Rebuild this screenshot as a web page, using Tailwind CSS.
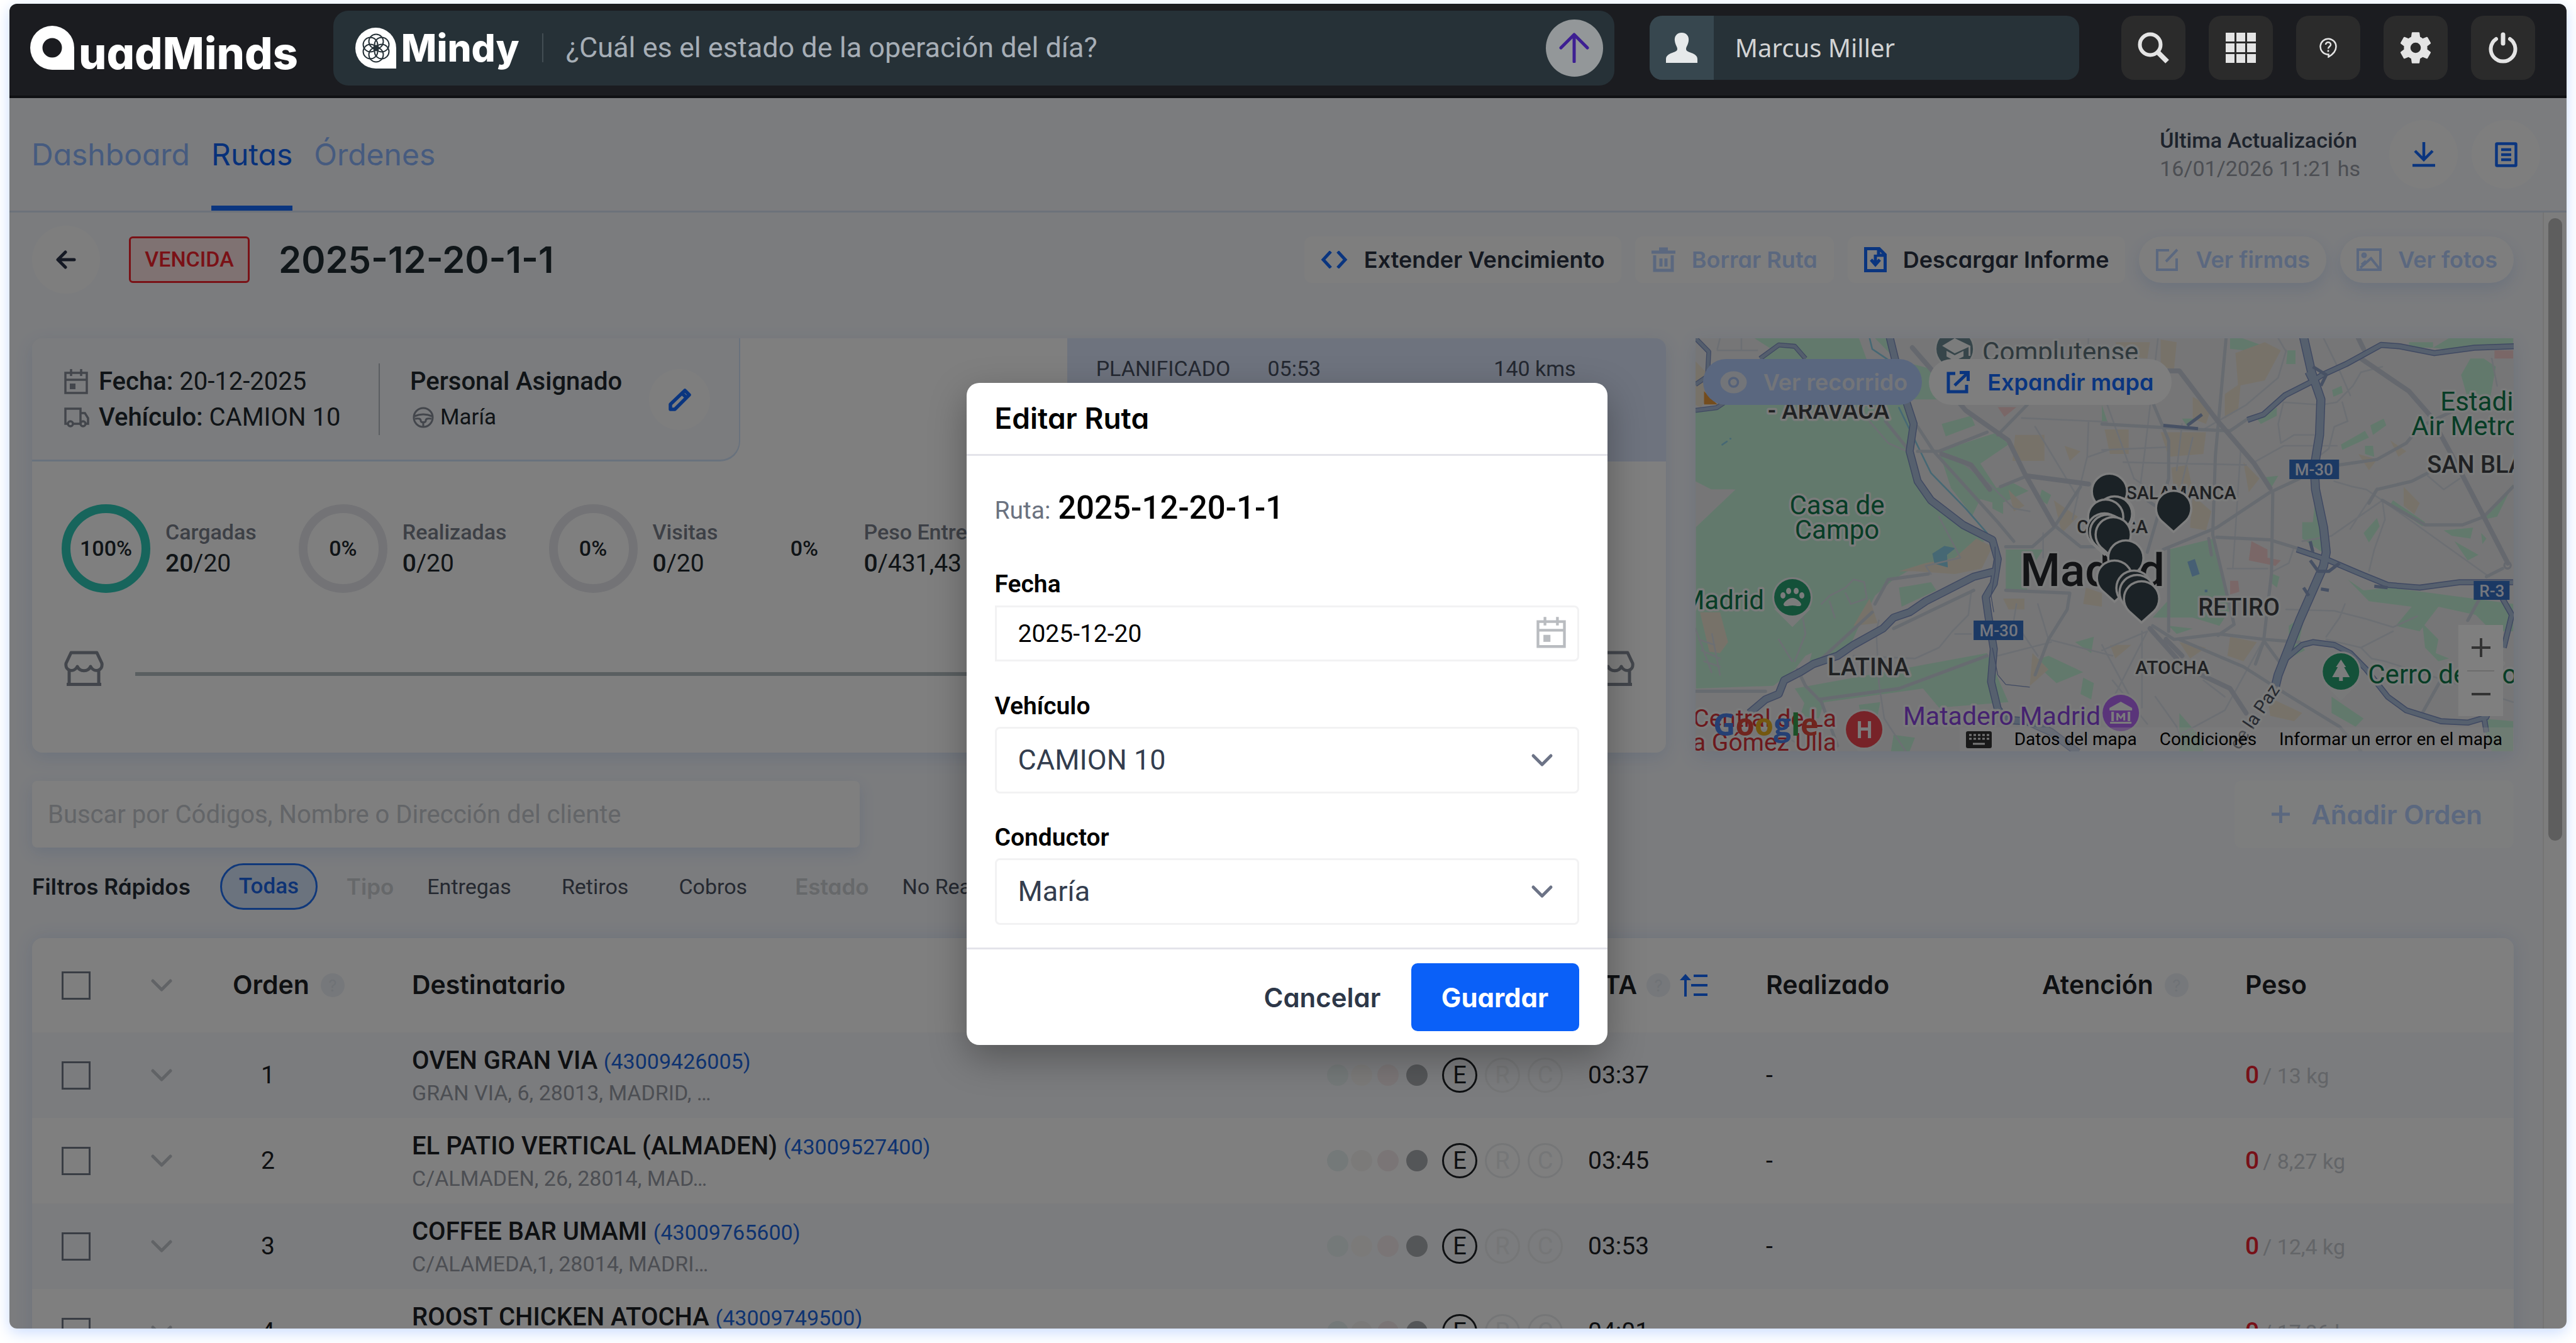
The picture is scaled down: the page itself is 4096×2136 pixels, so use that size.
<!DOCTYPE html>
<html lang="es" class="h-full">
<head>
    <meta charset="UTF-8">
    <meta name="viewport" content="width=device-width, initial-scale=1.0">
    <title>QuadMinds - Editar Ruta</title>
    <script src="https://cdn.jsdelivr.net/npm/@tailwindcss/browser@4"></script>
    <style>
        body {
            font-family: Roboto, sans-serif;
        }
        .display {
            font-family: Inter, sans-serif;
            font-feature-settings: 'cv11';
        }
    </style>
</head>
<body class="h-screen overflow-hidden bg-white px-[15px] pt-[6px] pb-[23px]">

    <!-- Shared icons -->
    <svg class="hidden">
        <symbol id="i-calendar" viewBox="0 0 38 40">
            <path fill="none" stroke="currentColor" stroke-width="3.5" d="M2 6h34v32H2zM2 17h34M11 0v11M27 0v11"/>
            <path fill="currentColor" d="M9 23h9v9H9z"/>
        </symbol>
        <symbol id="i-chevron" viewBox="0 0 36 22">
            <path fill="none" stroke="currentColor" stroke-width="5" stroke-linecap="round" stroke-linejoin="round" d="M4 4l14 14L32 4"/>
        </symbol>
        <symbol id="i-shop" viewBox="0 0 63 57">
            <path fill="none" stroke="currentColor" stroke-width="5" stroke-linejoin="round" d="M11 3h41l8 17c2 13-13 15-18 5-4 9-17 9-21 0-5 10-20 8-18-5zM8 30v23M55 30v23M4 53.500h55"/>
        </symbol>
    </svg>

    <div class="flex h-full flex-col overflow-hidden rounded-xl shadow-[0_6px_24px_#c9dbff]">

        <!-- Top bar -->
        <header class="flex h-[150px] shrink-0 items-center border-b-4 border-[#0f1013] bg-[#1b1c20] pr-[50px] pb-[6px] pl-[33px]">
            <a href="#" class="flex items-end" aria-label="QuadMinds">
                <svg class="h-[70px] w-[70px]" viewBox="0 0 70 70"><path fill="#fff" fill-rule="evenodd" d="M35 0a35 35 0 0 1 35 35v35H35A35 35 0 0 1 35 0zm0 19.500a15.500 15.500 0 1 0 0 31 15.500 15.500 0 0 0 0-31z"/></svg>
                <span class="display ml-[7px] h-[70px] text-[70px] leading-[88px] font-extrabold text-white">uadMinds</span>
            </a>
            <div class="ml-[56px] flex h-[119px] w-[2037px] items-center rounded-[24px] bg-[#263137] pr-[18px] pl-[35px]">
                <svg class="h-[65px] w-[65px]" viewBox="0 0 65 65">
                    <path fill="#fff" d="M32.500 0A32.500 32.500 0 0 1 65 32.500V65H32.500a32.500 32.500 0 0 1 0-65z"/>
                    <g fill="none" stroke="#263137" stroke-width="2">
                        <circle cx="33" cy="22" r="11.500"/><circle cx="33" cy="43" r="11.500"/>
                        <circle cx="24" cy="27" r="11.500"/><circle cx="42" cy="27" r="11.500"/>
                        <circle cx="24" cy="38" r="11.500"/><circle cx="42" cy="38" r="11.500"/>
                        <circle cx="33" cy="32.500" r="4"/>
                    </g>
                </svg>
                <span class="display ml-[8px] text-[60px] leading-[68px] font-extrabold text-white">Mindy</span>
                <span class="ml-[36px] h-[46px] w-[2px] bg-[#434d53]"></span>
                <input type="text" aria-label="Pregunta a Mindy" placeholder="¿Cuál es el estado de la operación del día?" class="ml-[36px] min-w-0 flex-1 bg-transparent text-[45px] leading-[56px] placeholder:text-[#a6aeb6] outline-none">
                <button type="button" aria-label="Enviar" class="flex h-[91px] w-[91px] items-center justify-center rounded-full bg-[#939799]">
                    <svg class="h-[48px] w-[48px]" viewBox="0 0 48 48" fill="none" stroke="#3d1f92" stroke-width="5" stroke-linecap="round" stroke-linejoin="round"><path d="M24 46V3M3 24L24 3l21 21"/></svg>
                </button>
            </div>
            <div class="ml-[56px] flex h-[102px] w-[683px] items-center overflow-hidden rounded-[20px] bg-[#273238]">
                <span class="flex h-full w-[102px] items-center justify-center bg-[#37474f]">
                    <svg class="h-[48px] w-[50px]" viewBox="0 0 50 48" fill="#e6e9ea"><path d="M25 0c8 0 12 6 11 13-1 7-4 9-4 13 0 3 3 4 8 6 6 2 10 5 10 10v6H0v-6c0-5 4-8 10-10 5-2 8-3 8-6 0-4-3-6-4-13C13 6 17 0 25 0z"/></svg>
                </span>
                <span class="pl-[34px] font-['Noto_Sans',sans-serif] text-[40px] text-[#d2d3d4]">Marcus Miller</span>
            </div>
            <nav class="ml-auto flex gap-[37px] text-[#e4e4e4]">
                <button type="button" aria-label="Buscar" class="flex h-[102px] w-[102px] items-center justify-center rounded-[20px] bg-[#2b2b2b]">
                    <svg class="h-[50px] w-[50px]" viewBox="0 0 50 50" fill="none" stroke="currentColor"><circle cx="20" cy="20" r="16.500" stroke-width="6"/><path stroke-width="8" d="M31 31l16 16"/></svg>
                </button>
                <button type="button" aria-label="Aplicaciones" class="flex h-[102px] w-[102px] items-center justify-center rounded-[20px] bg-[#2b2b2b]">
                    <svg class="h-[48px] w-[48px]" viewBox="0 0 48 48" fill="currentColor"><path d="M0 0h14v14H0zM17 0h14v14H17zM34 0h14v14H34zM0 17h14v14H0zM17 17h14v14H17zM34 17h14v14H34zM0 34h14v14H0zM17 34h14v14H17zM34 34h14v14H34z"/></svg>
                </button>
                <button type="button" aria-label="Ayuda" class="flex h-[102px] w-[102px] items-center justify-center rounded-[20px] bg-[#2b2b2b]">
                    <svg class="h-[32px] w-[28px]" viewBox="0 0 28 32" fill="none" stroke="currentColor" stroke-width="2.500"><path d="M12 26.500A12.500 12.500 0 1 1 26.500 14c0 7-6 13-12 16.500v-4z"/><path d="M10 11c0-5 8-5 8 0 0 3-4 3-4 6.500M14 19.500v3"/></svg>
                </button>
                <button type="button" aria-label="Configuración" class="flex h-[102px] w-[102px] items-center justify-center rounded-[20px] bg-[#2b2b2b]">
                    <svg class="h-[62px] w-[62px]" viewBox="0 0 24 24" fill="currentColor"><path d="M19.140 12.940c.04-.3.060-.61.060-.94s-.02-.64-.07-.94l2.030-1.580a.5.5 0 0 0 .12-.61l-1.920-3.320a.5.5 0 0 0-.59-.22l-2.390.96a7 7 0 0 0-1.620-.94l-.36-2.540A.48.48 0 0 0 13.920 2.400h-3.840a.48.48 0 0 0-.47.41l-.36 2.540c-.59.24-1.130.57-1.620.94l-2.390-.96a.48.48 0 0 0-.59.220L2.740 8.870a.48.48 0 0 0 .12.61l2.030 1.580c-.05.3-.09.630-.09.940s.02.640.070.940l-2.030 1.580a.5.5 0 0 0-.12.610l1.920 3.320c.12.220.37.290.59.220l2.390-.96c.5.380 1.030.7 1.620.940l.36 2.540c.05.240.24.410.48.410h3.840c.24 0 .44-.17.47-.41l.36-2.540a7 7 0 0 0 1.620-.94l2.390.960c.22.080.47 0 .59-.22l1.920-3.320a.48.48 0 0 0-.12-.61zM12 15.200a3.200 3.200 0 1 1 0-6.400 3.200 3.200 0 0 1 0 6.400z"/></svg>
                </button>
                <button type="button" aria-label="Salir" class="flex h-[102px] w-[102px] items-center justify-center rounded-[20px] bg-[#2b2b2b]">
                    <svg class="h-[50px] w-[46px]" viewBox="0 0 46 50" fill="none" stroke="currentColor" stroke-width="6" stroke-linecap="round"><path d="M12 11a19.500 19.500 0 1 0 22 0"/><path stroke-width="7" d="M23 4v14"/></svg>
                </button>
            </nav>
        </header>

        <div class="relative flex min-h-0 flex-1 flex-col overflow-hidden bg-[#f6f8fc]">

            <!-- Tabs -->
            <div class="flex h-[182px] shrink-0 items-stretch border-b-[3px] border-[#d8e5f5] pr-[42px] pl-[35px]">
                <nav class="display flex items-stretch gap-[34px] text-[48px] leading-[179px]">
                    <a href="#" class="text-[#8cb6ff]">Dashboard</a>
                    <a href="#" class="relative text-[#0f62f5] after:absolute after:inset-x-0 after:bottom-0 after:h-[8px] after:bg-[#146aff]">Rutas</a>
                    <a href="#" class="text-[#8cb6ff]">Órdenes</a>
                </nav>
                <div class="ml-auto flex items-center gap-[22px]">
                    <div class="mr-[24px] text-[34px] leading-[45px]">
                        <p class="font-medium text-[#3b4658]">Última Actualización</p>
                        <p class="text-[#989ca6]">16/01/2026 11:21 hs</p>
                    </div>
                    <button type="button" aria-label="Descargar" class="flex h-[109px] w-[109px] items-center justify-center rounded-full bg-[#fdfdfd] text-[#146aff]">
                        <svg class="h-[40px] w-[36px]" viewBox="0 0 36 40" fill="none" stroke="currentColor" stroke-width="4.500"><path d="M18 0v28M4 14l14 14 14-14M0 37h36"/></svg>
                    </button>
                    <button type="button" aria-label="Listado" class="flex h-[109px] w-[109px] items-center justify-center rounded-full bg-[#fdfdfd] text-[#146aff]">
                        <svg class="h-[40px] w-[36px]" viewBox="0 0 36 40" fill="none" stroke="currentColor" stroke-width="4.500"><rect x="2.500" y="2.500" width="31" height="35" rx="1"/><path d="M10 12h16M10 20h16M10 28h16"/></svg>
                    </button>
                </div>
            </div>

            <div class="flex min-h-0 flex-1">
                <main class="min-w-0 flex-1 overflow-hidden pt-[20px] pr-[46px] pl-[36px]">

                    <!-- Route title and actions -->
                    <div class="flex h-[109px] items-center">
                        <button type="button" aria-label="Volver" class="flex h-[108px] w-[108px] items-center justify-center rounded-full bg-[#fdfdfd] text-[#2b3348]">
                            <svg class="h-[30px] w-[32px]" viewBox="0 0 32 30" fill="none" stroke="currentColor" stroke-width="5" stroke-linecap="round" stroke-linejoin="round"><path d="M29 15H4M15 3L3 15l12 12"/></svg>
                        </button>
                        <span class="ml-[46px] flex h-[74px] w-[192px] items-center justify-center rounded-[6px] border-[3px] border-[#f5222d] bg-[#ffe4e4] text-[34px] font-medium text-[#f5222d]">VENCIDA</span>
                        <h1 class="display ml-[46px] text-[58px] leading-[70px] font-semibold text-[#202d33]">2025-12-20-1-1</h1>
                        <div class="display ml-auto flex items-center gap-[22px] text-[36px] leading-[42px] font-semibold">
                            <button type="button" class="flex h-[74px] items-center gap-[26px] rounded-xl bg-[#fdfdfd] px-[26px] text-[#2a3242]">
                                <svg class="h-[28px] w-[43px]" viewBox="0 0 43 28" fill="none" stroke="#146aff" stroke-width="5"><path d="M16 1L4 14l12 13M27 1l12 13-12 13"/></svg>
                                Extender Vencimiento
                            </button>
                            <button type="button" disabled class="flex h-[74px] items-center gap-[26px] rounded-xl bg-[#fdfdfd] px-[26px] text-[#b6d0ff]">
                                <svg class="h-[40px] w-[38px]" viewBox="0 0 38 40" fill="none" stroke="currentColor" stroke-width="5"><path d="M5 13v24h28V13M0 8h38M12 3h14M15 18v13M23 18v13"/></svg>
                                Borrar Ruta
                            </button>
                            <button type="button" class="flex h-[74px] items-center gap-[26px] rounded-xl bg-[#fdfdfd] px-[26px] text-[#2a3242]">
                                <svg class="h-[40px] w-[36px]" viewBox="0 0 36 40" fill="none" stroke="#146aff" stroke-width="5"><path d="M2.500 2.500H24L33.500 12v25.500h-31zM18 12v12M11 20l7 8 7-8M23 3v10h10"/></svg>
                                Descargar Informe
                            </button>
                            <button type="button" disabled class="flex h-[74px] items-center gap-[26px] rounded-full bg-[#fdfdfd] px-[26px] text-[#b6d0ff] shadow-[0_10px_24px_#d9e5fa]">
                                <svg class="h-[38px] w-[38px]" viewBox="0 0 38 38" fill="none" stroke="currentColor" stroke-width="4"><path d="M22 4H3v31h31V17M17 22L35 3"/></svg>
                                Ver firmas
                            </button>
                            <button type="button" disabled class="flex h-[74px] items-center gap-[26px] rounded-full bg-[#fdfdfd] px-[26px] text-[#b6d0ff] shadow-[0_10px_24px_#d9e5fa]">
                                <svg class="h-[38px] w-[40px]" viewBox="0 0 40 38" fill="none" stroke="currentColor" stroke-width="4"><path d="M2 3h36v32H2zM6 32l17-15 13 16M8 27l7-6"/><circle cx="12" cy="12" r="2.500"/></svg>
                                Ver fotos
                            </button>
                        </div>
                    </div>

                    <div class="mt-[71px] grid grid-cols-[2597fr_1301fr] items-start gap-[47px]">

                        <!-- Route summary -->
                        <section class="overflow-hidden rounded-2xl bg-white pb-[105px] shadow-[0_8px_28px_#d9e5fa]">
                            <div class="flex h-[196px] justify-between">
                                <div class="flex w-[1126px] items-start rounded-br-[32px] border-r-2 border-b-[3px] border-[#d3e4fa] bg-[#f6f8fc] pt-[40px] pr-[46px] pl-[51px] text-[40px] leading-[57px] text-[#20282e]">
                                    <div class="h-[114px] w-[502px] border-r-2 border-[#b6bcc4]">
                                        <p class="flex items-center gap-[17px]"><svg class="h-[40px] w-[38px] text-[#878d98]"><use href="#i-calendar"/></svg><span><b class="font-medium">Fecha:</b> 20-12-2025</span></p>
                                        <p class="flex items-center gap-[15px]">
                                            <svg class="h-[32px] w-[40px] text-[#878d98]" viewBox="0 0 40 32" fill="none" stroke="currentColor" stroke-width="3.500"><path d="M5 26H2V2h24v24H15M26 9h7l5 8v9h-3"/><circle cx="10" cy="26" r="4"/><circle cx="30" cy="26" r="4"/></svg>
                                            <span><b class="font-medium">Vehículo:</b> CAMION 10</span>
                                        </p>
                                    </div>
                                    <div class="ml-[48px]">
                                        <p class="font-medium">Personal Asignado</p>
                                        <p class="flex items-center gap-[10px] pl-[4px] text-[35px]">
                                            <svg class="h-[34px] w-[34px] text-[#878d98]" viewBox="0 0 34 34" fill="none" stroke="currentColor" stroke-width="3"><circle cx="17" cy="17" r="15"/><path d="M3 15q14-6 28 0M17 31v-8M4 19c6-1 9 0 9 3s4 3 4 3 4 0 4-3 3-4 9-3"/></svg>
                                            María
                                        </p>
                                    </div>
                                    <button type="button" aria-label="Editar personal" class="mt-[9px] ml-auto flex h-[97px] w-[97px] items-center justify-center rounded-full bg-[#fdfdfd]">
                                        <svg class="h-[36px] w-[36px]" viewBox="0 0 36 36" fill="none" stroke="#146aff" stroke-width="5.500" stroke-linejoin="round"><path d="M3 33v-8L26 3l7 7-23 23zM22 8l6 6"/></svg>
                                    </button>
                                </div>
                                <div class="flex w-[952px] bg-[#dce7fd] pt-[28px] pr-[143px] pl-[46px] text-[34px] leading-[40px] text-[#485062]">
                                    <span>PLANIFICADO</span><span class="ml-[59px]">05:53</span><span class="ml-auto">140 kms</span>
                                </div>
                            </div>
                            <div id="stats" class="mt-[68px] flex gap-[67px] pl-[47px]"></div>
                            <div class="mt-[92px] flex items-center pr-[50px] pl-[51px] text-[#868d98]">
                                <svg class="h-[57px] w-[63px]"><use href="#i-shop"/></svg>
                                <span class="mx-[50px] mt-[16px] h-[6px] flex-1 bg-[#b4bec2]"></span>
                                <svg class="h-[57px] w-[63px]"><use href="#i-shop"/></svg>
                            </div>
                        </section>

                        <!-- Map -->
                        <section class="relative h-[657px] overflow-hidden shadow-[0_8px_28px_#d9e5fa]">
                            <svg class="h-full w-full bg-[#ececee]" viewBox="0 0 1301 657" preserveAspectRatio="xMidYMid slice">
                                <g transform="translate(-12 -11) scale(.4245 .4336)" fill="none" stroke-linejoin="round" stroke-linecap="round">
                                    <g fill="#c5f3d8">
                                        <path d="M240 20H740l90 250 20 110-20 60 40 120 60 80 110 80 70 50-30 10-110 70-130 20-70 40-70 60-50 100-80 60-130 60-40 50-80 60-290 10V700l140-120-90 0-60-30V290l100-20 80-80 60-80 60-40z"/>
                                        <path d="M840 120l80 20 60 110-140 0zM950 340l110-30 15 35-110 40zM940 440l220-70 40 45-105 70 60 90 60-20 60 30-110 50-70-20-30 60-80-100z"/>
                                        <path d="M1325 580l35 20-15 35-30-20zM1140 610l40 20v40l-40-20zM1190 800h140l-60 90v60h-80zM790 940l120-20 20 30-130 60zM480 1120l170-60-60 130-140 40zM400 1310l720-130 80 180-260 20-60-70-440 60zM440 1350l80-20-30 90-70-10zM1290 1210l60-20 130 60-100 40zM1450 1140l70-20-10 60zM1480 1270l40 20-10 60-40-20zM640 1370l80-10-10 50-60 20zM770 1480l80 10-20 50h-70z"/>
                                    </g>
                                    <path fill="#ececee" d="M28 550l60 30h90L60 690 28 720zM640 25h60l80 80h-110z"/>
                                    <g fill="#efe5d3">
                                        <path d="M790 880l100-30 110-20 80-70 60 30-40 80-100 20-150-10zM620 1080l60-100 20 60 10 30zM45 1030h75l30 110-30 40-40-5zM28 110l80 80-60 90-20-10zM1225 380h110v95h-120zM1410 420l60 20-40 35zM1200 580l60 60-40 20zM1370 620l90 60-60 60zM1180 980h80v40h-60zM1290 1180l60 60-70 60zM1490 940l60 20v50l-70-10z"/>
                                    </g>
                                    <path fill="#e99a3c" d="M60 220l50 48H60z"/>
                                    <path fill="#8dd0e8" d="M915 815l45-28 42 8-32 25 3 46-50-14z"/>
                                    <path stroke="#8dd0e8" stroke-width="6" d="M680 25l10 40 60 40M790 280l90 180 30 60 130 130 80 90M128 416l18-12M158 394h2"/>
                                    <path fill="#f5cfcf" d="M1160 278h70l-45 36z"/>
                                    <path stroke="#d9dee7" stroke-width="6" d="M110 70h150M120 25l-10 40M200 25v45M680 330l70 80 70 30M400 1210l40-100-10-60M340 1130l50 80M530 970l-30 30M530 970l60-30 30-30 40 10 10 60-60 20-20-40M530 990l20 60M940 680l80 150-130 30 20 30M1060 960l-10 80-60 60-50 60-90 40-230-10M715 1290l-10-190 10-40M1000 1110h60M715 1290l20 130 80 120M390 1500l60 40M1000 460l140 110 80 80 60 10M1230 1000l-10 60 90 130M1310 1000l40 130M1490 250l10-230M1250 318l320 14M1500 330l-5 130-30 120M1500 460l120-40M1440 690l30-130M1160 1190l200-50M1350 1130l120 30 120 30M1330 740v90M1300 350l160 260M28 1090l60 160M40 1130l60 20M50 1170l70 30M60 1210l60 20M90 1110l30 150"/>
                                    <path stroke="#cfd6e1" stroke-width="12" d="M740 330l90 110M860 440h80l180-70M1160 380l110-110M860 350l60 90 240 260 60 70M1200 640M1190 790h100l80-70 100-150M1170 570l100-40M1370 710l100 80h120M1190 950l240 10-10 60-70 110-50 130M490 1350l300-40 330-120M30 1320l260 0M410 1240l30 60 60 60 60 160M700 1000l50-90 150-20M690 1030l-200 180M770 1090l300-140M620 1520M1000 1130"/>
                                    <path stroke="#cad1dc" stroke-width="18" d="M840 60l80 90 120 140 160 110 60 120 110 190M1270 530l230 30M950 450l110 40 70 90"/>
                                    <g stroke-linecap="butt">
                                        <path stroke="#7f92c4" stroke-width="18" d="M28 25l50 50-5 90-45 30M28 290l80-10 60-40M270 100l70-50 60 5 40 45"/>
                                        <path stroke="#a9bcda" stroke-width="12" d="M28 25l50 50-5 90-45 30M28 290l80-10 60-40M270 100l70-50 60 5 40 45"/>
                                        <path stroke="#7f92c4" stroke-width="30" d="M755 20l50 200 40 120-15 100 30 110 50 70 120 90 110 55 20 70-15 90-30 50 10 70 20 120-10 120 25 100 30 40 80 5 90 40 100 75M230 1400l60-50 50-20 20-50 60-30 50-30 90-30 60-40 110-60 40-40 60-20 60-40 180-90 80-20"/>
                                        <path stroke="#adc0dd" stroke-width="23" d="M755 20l50 200 40 120-15 100 30 110 50 70 120 90 110 55 20 70-15 90-30 50 10 70 20 120-10 120 25 100 30 40 80 5 90 40 100 75M230 1400l60-50 50-20 20-50 60-30 50-30 90-30 60-40 110-60 40-40 60-20 60-40 180-90 80-20"/>
                                        <path stroke="#7f92c4" stroke-width="3" d="M1150 790v90l-15 90 10 60M1140 1160l20 100 30 35 90 10"/>
                                    </g>
                                </g>
                                <g transform="translate(646 -11) scale(.4245 .4336)" fill="none" stroke-linejoin="round" stroke-linecap="round">
                                    <g fill="#c5f3d8">
                                        <path d="M250 800l170-40 60 260-40 60-100-30H190l55-60zM480 25h45l85 30-10 20-120-10zM695 70h30v50h-35zM862 215l35-15 5 25-35 15zM580 320l75-40v30l-60 30zM1380 100h50l45 30-20 110-90-10-20-70zM1005 345l50-25 10 25-50 35zM895 415l90-50 15 25-100 45zM985 420l30 0 5 40-35-10zM610 535l50-5-30 50zM750 700h40l15-150 20 260-75-50zM980 740l50-55 10 30-40 60zM1090 620l120 80-10 15-120-80zM1280 730l110-10-10 40-70-10zM1320 770l90 50-40 20zM1420 740l20 20-15 20zM640 890l25 10-10 40-25-20zM920 910l60 40 100-10 460 60v100h-80l-60-60-140-30-70 90-90-20 60-70-160-20zM1200 1070l60 60-10 50 50 20-40 10-50-50zM860 1340l60 40 60 40-30 30-90-50zM1420 1420l120 10v110h-80zM700 1080l60-40-20 90 20 40-60 30zM250 1080l90 10-60 20zM290 1400l80 90 10 50h-90zM0 270l20 60-20 0zM300 320l50 0-30 30zM1430 690l110-130-60 120zM1240 60l60-35h240v20l-260 20zM1150 40h90v20h-90z"/>
                                    </g>
                                    <g fill="#efe5d3">
                                        <path d="M50 40h130l-10 60-100-10zM220 30l60 10-10 100-50-10zM500 80l110-40 60 30-60 110-100 20zM460 230l60-40-10 100-50 30zM340 240l70 40-20 60-50-20zM10 360h90v90H30zM220 370h170l-10 80-130 10zM260 500l60-10 20 90-70 10zM530 480l60 60-40 50zM340 600l70 60-20 70-60-10zM1080 400l60 40-30 20zM1130 570l60 60-20 40-40-30zM480 1120l100 20-50 70-60-20zM290 1140l100 20-60 40zM620 1340l130 60-30 30-90-20zM30 1150l80 0-60 50zM960 450l70 20-30 40z"/>
                                    </g>
                                    <path fill="#f5cfcf" d="M560 770l60 30v30l50 10-20 20-100-20zM480 915l30 0 5 40-35 10zM1470 70h70v30h-70z"/>
                                    <path fill="#8dbfe8" d="M320 845l28-10 18 55-28 10zM385 947h10v10h-10z"/>
                                    <path stroke="#d9dee7" stroke-width="6" d="M210 25l-50 420-20 150M280 640l60-250M300 340l-20 170M20 270l100 270 60 40M0 435l240-10M80 480l460 10M520 430l-20 300-10 140M690 70l-30 100-120 100-160 90M660 25l30 50M570 480l110-60h200M680 260l-20 80 10 70 50-30h80M680 260l140 10 60-10 60-60 30-50 80-20M900 260l20 70-50 20-20 80-40 30M1050 620l10 70-40 110-20 80M870 550l70 20 50 10 60 40 400 280M1050 620l-190 130-110 20M1030 575l-100 150M1220 530l60 50 60-40M830 25l60 120 40 90M690 1020l180 5 120 30 100 30 90-40M840 1130l130 30 40 40 50 10 480 150M840 1120l50-70 20-50M970 1160l120-60M1460 100l20 100M470 870h150M640 880l60-30 20-60M0 1170l170-70M170 1100L40 1350M150 1100v280M0 1280M40 1280l130 160M200 1340l80 110 20 60M600 1140l-140 250-170 90M0 1150l100 180M380 1280l80 60"/>
                                    <path stroke="#cfd6e1" stroke-width="12" d="M465 25l-40 430-10 290 80 330-60 40M190 260l60 140v140l-80 270M0 340l360 20 120 5 60-40M230 800l200-80 200-130 110-50M890 490l140-20 110-60 50-60 130-60M720 620M430 755l200 10 100 30M640 590l-5 300-30 250-30 80M250 800v300M190 1080l80 50 170-20 170 20 130 10M290 1130l240 100 160 100 200 120 80 90M610 1140l60 80M410 820l-10-60M1000 630l30-50 130-30 60-30M1050 620l160 90 140 0 80-30 110-110M1420 970l-50 90M1280 1260l-80 140M170 620l60 40M1440 900l60-30M160 590"/>
                                    <path stroke="#cad1dc" stroke-width="18" d="M240 145h50l140 180 140 160 60 90M180 1090l100 110M350 1250l130 60 60 90M970 100l180 120 80 90 100 180 190 360M960 25l20 40M240 1130l60 60"/>
                                    <circle cx="1519" cy="858" r="12" stroke="#cad1dc" stroke-width="8"/>
                                    <g stroke-linecap="butt">
                                        <path stroke="#7f92c4" stroke-width="34" d="M755 20l30 130 35 100-5 130-20 120 5 80 30 140 10 90-10 50-90 200-80 200-10 40"/>
                                        <path stroke="#7f92c4" stroke-width="22" d="M545 325l60-20 80-70 100-50 40-25 90-40 130-70 70 5 130 25 150-20 150-5M730 800l120 40 120 50 100 40 120 10 150-20 200 0M690 1200l60-50 40-10 80 10 60 30 60 60 80 100 70 50 130 40 100 5 70-20 20-50M1500 980l35 60-30 120M790 190l-20-40M1430 1410l10 60"/>
                                        <path stroke="#adc0dd" stroke-width="27" d="M755 20l30 130 35 100-5 130-20 120 5 80 30 140 10 90-10 50-90 200-80 200-10 40"/>
                                        <path stroke="#adc0dd" stroke-width="15" d="M545 325l60-20 80-70 100-50 40-25 90-40 130-70 70 5 130 25 150-20 150-5M730 800l120 40 120 50 100 40 120 10 150-20 200 0M690 1200l60-50 40-10 80 10 60 30 60 60 80 100 70 50 130 40 100 5 70-20 20-50M1500 980l35 60-30 120M790 190l-20-40M1430 1410l10 60"/>
                                        <path stroke="#8fa2c9" stroke-width="12" d="M790 130l50 30-20 40M780 840l30 40h40l40-30M780 770l10 40M230 345l130 12M320 345l55-40M755 940l20 30M820 945l30 5M1020 935l50 5"/>
                                    </g>
                                </g>

                                <!-- Place names -->
                                <g font-family="Roboto" stroke="#f4f6f6" stroke-width="7" stroke-linejoin="round" paint-order="stroke">
                                    <g font-size="42" fill="#0f7a4c">
                                        <text x="225" y="280" text-anchor="middle">Casa de</text>
                                        <text x="225" y="319" text-anchor="middle">Campo</text>
                                        <text x="109" y="431" text-anchor="end">Madrid</text>
                                        <text x="1184" y="115">Estadio</text>
                                        <text x="1138" y="154">Air Metro</text>
                                        <text x="1069" y="549">Cerro del Tío</text>
                                    </g>
                                    <text x="456" y="36" font-size="42" fill="#5e727a">Complutense</text>
                                    <g font-size="34" font-weight="500" fill="#404347">
                                        <text x="115" y="128" font-size="38">- ARAVACA</text>
                                        <text x="210" y="536" font-size="38">LATINA</text>
                                        <text x="799" y="441" font-size="38">RETIRO</text>
                                        <text x="1163" y="214" font-size="38">SAN BLAS</text>
                                        <text x="684" y="256" font-size="29">SALAMANCA</text>
                                        <text x="606" y="310" font-size="29">CHUECA</text>
                                        <text x="699" y="534" font-size="30">ATOCHA</text>
                                    </g>
                                    <text x="516" y="394" font-size="73" font-weight="500" fill="#26282c">Madrid</text>
                                    <text x="330" y="615" font-size="41" fill="#8a45e0">Matadero Madrid</text>
                                    <g font-size="39" fill="#d8323a">
                                        <text x="224" y="618" text-anchor="end">Central de La</text>
                                        <text x="224" y="656" text-anchor="end">a Gómez Ulla</text>
                                    </g>
                                    <text font-size="29" fill="#4c5260" transform="translate(864 656) rotate(-56)">de la Paz</text>
                                </g>

                                <!-- Road shields -->
                                <g font-family="Roboto" font-size="26" font-weight="500" fill="#e8eefc" text-anchor="middle">
                                    <path fill="#3672c9" d="M442 449h79v31h-79zM944 193h79v31h-79zM1237 386h57v30h-57z"/>
                                    <text x="482" y="474">M-30</text><text x="983" y="218">M-30</text><text x="1266" y="411">R-3</text>
                                </g>

                                <!-- Points of interest -->
                                <g stroke="#f1f3f3" stroke-width="6" paint-order="stroke">
                                    <path fill="#f1f3f3" d="M154 455l-22-22h44zM1026 572l-22-22h44zM268 662l-22-22h44zM676 636l-22-22h44z"/>
                                    <circle cx="154" cy="412" r="29" fill="#28a373"/>
                                    <circle cx="1026" cy="530" r="29" fill="#28a373"/>
                                    <circle cx="268" cy="622" r="29" fill="#ef4650"/>
                                    <circle cx="676" cy="596" r="29" fill="#b469f5"/>
                                    <circle cx="412" cy="17" r="29" fill="#6c8a94"/>
                                </g>
                                <g fill="#f6f8f8">
                                    <path d="M154 413c7 0 15 8 14 11-2 4-8 1-14 1s-12 3-14-1c-1-3 7-11 14-11z"/><ellipse cx="139" cy="409" rx="4" ry="5"/><ellipse cx="148" cy="402" rx="4" ry="5"/><ellipse cx="160" cy="402" rx="4" ry="5"/><ellipse cx="169" cy="409" rx="4" ry="5"/>
                                    <path d="M1026 511l8 12h-3l9 16h-11v6h-6v-6h-11l9-16h-3zM258 609h5v10h11v-10h5v27h-5v-12h-11v12h-5z"/>
                                    <path d="M676 578l18 10v4h-36v-4zM661 594h4v15h-4zM687 594h4v15h-4zM659 610h34v3h-34zM669 608v-12h3l4 6 4-6h3v12h-3v-7l-4 5-4-5v7z"/>
                                    <path d="M412 0l25 12v16h-3V14l-22 10-20-12zM399 20l13 7 14-7v9l-14 7-13-7z"/>
                                </g>

                                <!-- Stop pins -->
                                <defs><path id="pin" d="M0 37L-20 19A28 28 0 1 1 20 19Z"/></defs>
                                <g fill="#37454c" stroke="#fff" stroke-width="3.500">
                                    <use href="#pin" x="658" y="244"/><use href="#pin" x="760" y="271"/><use href="#pin" x="669" y="281"/>
                                    <use href="#pin" x="666" y="280"/><use href="#pin" x="652" y="285"/><use href="#pin" x="650" y="307"/><use href="#pin" x="655" y="309"/>
                                    <use href="#pin" x="664" y="313"/><use href="#pin" x="684" y="350"/><use href="#pin" x="666" y="382"/>
                                    <use href="#pin" x="697" y="398"/><use href="#pin" x="702" y="405"/><use href="#pin" x="709" y="415"/>
                                </g>

                                <text x="28" y="632" font-family="Open Sans" font-size="49" font-weight="700"><tspan fill="#4a80e8">G</tspan><tspan fill="#e04a3c">o</tspan><tspan fill="#e8b020">o</tspan><tspan fill="#4a80e8">g</tspan><tspan fill="#38a050">l</tspan><tspan fill="#e04a3c">e</tspan></text>
                            </svg>
                            <div class="display absolute top-[33px] left-[12px] flex gap-[11px] text-[36px] leading-[42px] font-semibold">
                                <button type="button" disabled class="flex h-[73px] items-center gap-[26px] rounded-full bg-[#b4ceff] pr-[23px] pl-[27px] text-[#e6eaf2]">
                                    <svg class="h-[36px] w-[43px]" viewBox="0 0 43 36"><ellipse cx="21.500" cy="18" rx="21" ry="17.500" fill="#e6eaf2"/><circle cx="21.500" cy="18" r="7" fill="none" stroke="#a9c2f2" stroke-width="3.500"/></svg>
                                    Ver recorrido
                                </button>
                                <button type="button" class="flex h-[73px] items-center gap-[28px] rounded-full bg-[#fdfdfd] px-[28px] text-[#146aff]">
                                    <svg class="h-[36px] w-[37px]" viewBox="0 0 37 36" fill="none" stroke="currentColor" stroke-width="5"><path d="M14 4H3v29h29V22M13 23L34 3M21 2.500h13.500V16"/></svg>
                                    Expandir mapa
                                </button>
                            </div>
                            <div class="absolute right-[17px] bottom-[56px] flex w-[71px] flex-col bg-white text-[#666]">
                                <button type="button" aria-label="Acercar" class="flex h-[72px] items-center justify-center"><svg class="h-[30px] w-[30px]" viewBox="0 0 30 30" stroke="currentColor" stroke-width="4"><path d="M0 15h30M15 0v30"/></svg></button>
                                <span class="mx-[14px] h-[2px] bg-[#d8d8d8]"></span>
                                <button type="button" aria-label="Alejar" class="flex h-[71px] items-center justify-center"><svg class="h-[30px] w-[30px]" viewBox="0 0 30 30" stroke="currentColor" stroke-width="4"><path d="M0 15h30"/></svg></button>
                            </div>
                            <div class="absolute right-0 bottom-0 flex h-[38px] items-center gap-[36px] bg-white/40 pr-[18px] pl-[10px] text-[28px] text-black">
                                <svg class="h-[27px] w-[41px]" viewBox="0 0 41 27"><rect width="41" height="27" rx="3" fill="#333"/><path stroke="#eee" stroke-width="3" stroke-dasharray="4 3" d="M5 6h32M5 12h32"/><path stroke="#eee" stroke-width="3" d="M11 20h19"/></svg>
                                <a href="#">Datos del mapa</a><a href="#">Condiciones</a><a href="#">Informar un error en el mapa</a>
                            </div>
                        </section>
                    </div>

                    <!-- Search -->
                    <div class="mt-[44px] flex h-[108px] items-center justify-between">
                        <input type="search" aria-label="Buscar órdenes" placeholder="Buscar por Códigos, Nombre o Dirección del cliente" class="h-[106px] w-[1316px] rounded-lg bg-white px-[25px] text-[40px] placeholder:text-[#c6cad0] shadow-[0_8px_24px_#d9e5fa]">
                        <button type="button" disabled class="display flex h-[108px] items-center gap-[34px] rounded-xl bg-[#fbfcfd] pr-[50px] pl-[59px] text-[42px] font-semibold text-[#b6d0ff]">
                            <svg class="h-[28px] w-[29px]" viewBox="0 0 29 28" stroke="currentColor" stroke-width="5"><path d="M0 14h29M14.500 0v28"/></svg>
                            Añadir Orden
                        </button>
                    </div>

                    <!-- Quick filters -->
                    <div class="mt-[24px] flex h-[74px] items-center text-[34px] whitespace-nowrap text-[#4a5262]">
                        <span class="display text-[35px] font-semibold text-[#252c36]">Filtros Rápidos</span>
                        <button type="button" class="ml-[47px] h-[74px] w-[155px] rounded-full border-[3px] border-[#2071f5] bg-[#d6e6fc] text-[35px] font-medium text-[#1c66e8]">Todas</button>
                        <span class="display ml-[46px] text-[35px] font-semibold text-[#cdd0d4]">Tipo</span>
                        <button type="button" class="ml-[53px]">Entregas</button>
                        <button type="button" class="ml-[80px]">Retiros</button>
                        <button type="button" class="ml-[80px]">Cobros</button>
                        <span class="display ml-[76px] text-[35px] font-semibold text-[#cdd0d4]">Estado</span>
                        <button type="button" class="ml-[53px]">No Realizados</button>
                    </div>

                    <!-- Orders -->
                    <div class="mt-[45px] overflow-hidden rounded-2xl bg-white shadow-[0_0_28px_#d9e5fa]">
                        <table class="w-full table-fixed text-left text-[39px] text-[#1d2024]">
                            <colgroup>
                                <col class="w-[128px]"><col class="w-[155px]"><col class="w-[321px]"><col><col class="w-[415px]"><col class="w-[283px]"><col class="w-[439px]"><col class="w-[323px]"><col class="w-[427px]">
                            </colgroup>
                            <thead class="display h-[150px] text-[41px]">
                                <tr>
                                    <th class="pl-[47px]"><input type="checkbox" aria-label="Seleccionar todas" class="block h-[45px] w-[46px] appearance-none border-[3px] border-[#727a88]"></th>
                                    <th><svg class="mx-auto h-[22px] w-[36px] text-[#c2c6cc]"><use href="#i-chevron"/></svg></th>
                                    <th class="pl-[36px] font-semibold"><span class="flex items-center gap-[18px]">Orden <i class="flex h-[38px] w-[38px] items-center justify-center rounded-full bg-[#edf1f6] text-[26px] font-normal text-[#dfe5ec] not-italic">?</i></span></th>
                                    <th class="font-semibold">Destinatario</th>
                                    <th></th>
                                    <th class="font-semibold"><span class="flex items-center gap-[15px]">ETA <i class="flex h-[38px] w-[38px] items-center justify-center rounded-full bg-[#edf1f6] text-[26px] font-normal text-[#dfe5ec] not-italic">?</i>
                                        <svg class="h-[36px] w-[44px]" viewBox="0 0 44 36" fill="none" stroke="#146aff" stroke-width="4"><path d="M9 36V6M22 3h22M18 18h26M22 33h22"/><path fill="#146aff" stroke="none" d="M9 0l9 10H0z"/></svg></span></th>
                                    <th class="font-semibold">Realizado</th>
                                    <th class="font-semibold"><span class="flex items-center gap-[18px]">Atención <i class="flex h-[38px] w-[38px] items-center justify-center rounded-full bg-[#edf1f6] text-[26px] font-normal text-[#dfe5ec] not-italic">?</i></span></th>
                                    <th class="font-semibold">Peso</th>
                                </tr>
                            </thead>
                            <tbody id="orders"></tbody>
                        </table>
                    </div>
                </main>

                <!-- Scrollbar -->
                <div class="w-[38px] shrink-0 border-l-2 border-[#e8e8e8] bg-[#fafafa] pt-[9px]">
                    <div class="mx-auto h-[990px] w-[22px] rounded-full bg-[#bdbdbd]"></div>
                </div>
            </div>

            <!-- Edit dialog -->
            <div class="absolute inset-0 flex items-center justify-center bg-black/50 pt-[2px] pr-[4px]">
                <form role="dialog" aria-labelledby="dialog-title" class="w-[1019px] rounded-[20px] bg-white text-black shadow-[0_20px_60px_rgb(0_0_0/0.3)]">
                    <h2 id="dialog-title" class="display border-b-[3px] border-[#e4e4ea] px-[45px] pt-[26px] pb-[27px] text-[46px] leading-[60px] font-semibold">Editar Ruta</h2>
                    <div class="px-[45px] pt-[50px] pb-[36px]">
                        <p class="text-[39px] leading-[66px] text-[#6b7280]">Ruta: <b class="ml-[2px] text-[51px] font-medium text-black">2025-12-20-1-1</b></p>
                        <label for="fecha" class="mt-[57px] block text-[39px] leading-[54px] font-semibold">Fecha</label>
                        <div class="relative mt-[7px]">
                            <input id="fecha" type="text" value="2025-12-20" class="h-[89px] w-full rounded-r-lg border-[3px] border-[#f2f2f3] px-[34px] text-[39px]">
                            <svg class="absolute top-[18px] right-[21px] h-[50px] w-[47px] text-[#b9bcc0]"><use href="#i-calendar"/></svg>
                        </div>
                        <label for="vehiculo" class="mt-[44px] block text-[39px] leading-[54px] font-semibold">Vehículo</label>
                        <div class="relative mt-[6px]">
                            <select id="vehiculo" class="h-[106px] w-full appearance-none rounded-lg border-[3px] border-[#f2f2f3] bg-white px-[34px] text-[45px] text-[#333d4e]"><option>CAMION 10</option></select>
                            <svg class="pointer-events-none absolute top-[42px] right-[41px] h-[22px] w-[36px] text-[#6c7386]"><use href="#i-chevron"/></svg>
                        </div>
                        <label for="conductor" class="mt-[43px] block text-[39px] leading-[54px] font-semibold">Conductor</label>
                        <div class="relative mt-[6px]">
                            <select id="conductor" class="h-[106px] w-full appearance-none rounded-lg border-[3px] border-[#f2f2f3] bg-white px-[34px] text-[45px] text-[#333d4e]"><option>María</option></select>
                            <svg class="pointer-events-none absolute top-[42px] right-[41px] h-[22px] w-[36px] text-[#6c7386]"><use href="#i-chevron"/></svg>
                        </div>
                    </div>
                    <div class="display flex items-center justify-end gap-[48px] border-t-[3px] border-[#e4e4ea] px-[45px] py-[22px] text-[42px] font-semibold">
                        <button type="button" class="text-[#2d3748]">Cancelar</button>
                        <button type="submit" class="h-[108px] w-[267px] rounded-[10px] bg-[#0a60f8] font-bold text-white">Guardar</button>
                    </div>
                </form>
            </div>
        </div>
    </div>

    <script>
        const stats = [
            ['100%', 'Cargadas', '20', '/20', 'border-[#2ecab8]'],
            ['0%', 'Realizadas', '0', '/20', 'border-[#e6e7ec]'],
            ['0%', 'Visitas', '0', '/20', 'border-[#e6e7ec]'],
            ['0%', 'Peso Entregado', '0', '/431,43', 'border-transparent'],
        ];
        document.getElementById('stats').innerHTML = stats.map(([pct, label, done, total, ring]) => `
            <div class="flex items-center gap-[24px] whitespace-nowrap">
                <span class="flex h-[141px] w-[141px] items-center justify-center rounded-full border-[14px] text-[34px] font-medium text-[#20282e] ${ring}">${pct}</span>
                <div class="pb-[4px] leading-[50px]">
                    <p class="text-[34px] font-medium text-[#7a808c]">${label}</p>
                    <p class="text-[39px] text-[#20282e]"><b class="font-medium">${done}</b>${total}</p>
                </div>
            </div>`).join('');

        const orders = [
            ['OVEN GRAN VIA', '43009426005', 'GRAN VIA, 6, 28013, MADRID, …', '03:37', '13'],
            ['EL PATIO VERTICAL (ALMADEN)', '43009527400', 'C/ALMADEN, 26, 28014, MAD…', '03:45', '8,27'],
            ['COFFEE BAR UMAMI', '43009765600', 'C/ALAMEDA,1, 28014, MADRI…', '03:53', '12,4'],
            ['ROOST CHICKEN ATOCHA', '43009749500', 'C/ATOCHA, 28012, MADRID…', '04:01', '17,86'],
        ];
        document.getElementById('orders').innerHTML = orders.map(([name, code, address, eta, kg], i) => `
            <tr class="h-[136px] odd:bg-[#f6f8fc]">
                <td class="pl-[47px]"><input type="checkbox" aria-label="Seleccionar orden ${i + 1}" class="block h-[45px] w-[46px] appearance-none border-[3px] border-[#727a88]"></td>
                <td><svg class="mx-auto h-[22px] w-[36px] text-[#c2c6cc]"><use href="#i-chevron"/></svg></td>
                <td class="pl-[36px]"><span class="block w-[112px] text-center">${i + 1}</span></td>
                <td class="pt-[4px] leading-[50px]">
                    <p><b class="text-[40px] font-medium">${name}</b> <a href="#" class="text-[34px] text-[#1d66e0]">(${code})</a></p>
                    <p class="text-[34px] text-[#989ca6]">${address}</p>
                </td>
                <td><span class="flex items-center">
                    <i class="h-[34px] w-[34px] rounded-full bg-[#e9f2f2]"></i>
                    <i class="ml-[4px] h-[34px] w-[34px] rounded-full bg-[#f7f5f3]"></i>
                    <i class="ml-[8px] h-[34px] w-[34px] rounded-full bg-[#f4ebec]"></i>
                    <i class="ml-[12px] h-[34px] w-[34px] rounded-full bg-[#a9acb0]"></i>
                    <b class="ml-[23px] flex h-[56px] w-[56px] items-center justify-center rounded-full border-[3px] border-[#1d2024] text-[38px] font-normal">E</b>
                    <b class="ml-[12px] flex h-[56px] w-[56px] items-center justify-center rounded-full border-[3px] border-[#eaecef] text-[38px] font-normal text-[#eaecef]">R</b>
                    <b class="ml-[12px] flex h-[56px] w-[56px] items-center justify-center rounded-full border-[3px] border-[#eaecef] text-[38px] font-normal text-[#eaecef]">C</b>
                </span></td>
                <td>${eta}</td>
                <td>-</td>
                <td></td>
                <td><span class="font-medium text-[#ee2230]">0</span><span class="ml-[6px] text-[34px] text-[#c6cad0]">/ ${kg} kg</span></td>
            </tr>`).join('');
    </script>
</body>
</html>
